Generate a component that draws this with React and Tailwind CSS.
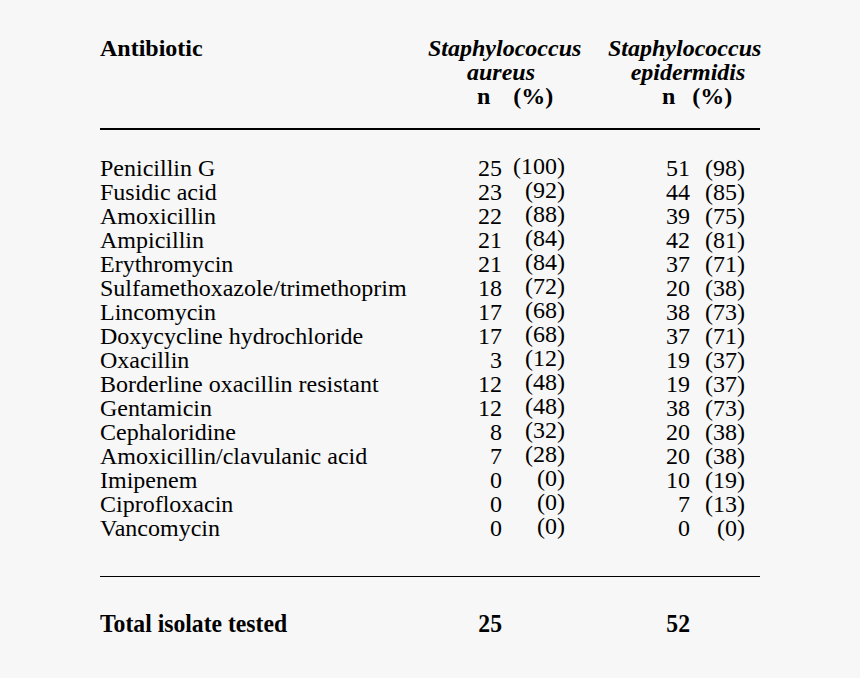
import React from "react";

const rows = [
  ["Penicillin G", "25", "(100)", "51", "(98)"],
  ["Fusidic acid", "23", "(92)", "44", "(85)"],
  ["Amoxicillin", "22", "(88)", "39", "(75)"],
  ["Ampicillin", "21", "(84)", "42", "(81)"],
  ["Erythromycin", "21", "(84)", "37", "(71)"],
  ["Sulfamethoxazole/trimethoprim", "18", "(72)", "20", "(38)"],
  ["Lincomycin", "17", "(68)", "38", "(73)"],
  ["Doxycycline hydrochloride", "17", "(68)", "37", "(71)"],
  ["Oxacillin", "3", "(12)", "19", "(37)"],
  ["Borderline oxacillin resistant", "12", "(48)", "19", "(37)"],
  ["Gentamicin", "12", "(48)", "38", "(73)"],
  ["Cephaloridine", "8", "(32)", "20", "(38)"],
  ["Amoxicillin/clavulanic acid", "7", "(28)", "20", "(38)"],
  ["Imipenem", "0", "(0)", "10", "(19)"],
  ["Ciprofloxacin", "0", "(0)", "7", "(13)"],
  ["Vancomycin", "0", "(0)", "0", "(0)"],
];

const grid = "grid grid-cols-[320px_82px_63px_125px_55px]";

export default function App() {
  return (
    <div
      className="w-[860px] h-[678px] bg-[#f7f7f7] text-black overflow-hidden"
      style={{ fontFamily: '"Liberation Serif", "Times New Roman", serif' }}
    >
      <div className="pl-[100px] pt-[36px] w-[760px]">
        {/* Header */}
        <div className="flex text-[24px] leading-[24px] font-bold">
          <div className="w-[328px]">Antibiotic</div>
          <div className="w-[152px] flex flex-col">
            <div className="italic text-center">Staphylococcus</div>
            <div className="italic text-center pr-[6px]">aureus</div>
            <div className="flex pl-[49px]">
              <span>n</span>
              <span className="ml-[23px]">(%)</span>
            </div>
          </div>
          <div className="w-[28px]" />
          <div className="w-[152px] flex flex-col">
            <div className="italic text-center">Staphylococcus</div>
            <div className="italic text-center pl-[8px]">epidermidis</div>
            <div className="flex pl-[54px]">
              <span>n</span>
              <span className="ml-[17px]">(%)</span>
            </div>
          </div>
        </div>

        <div className="mt-[20px] h-[1.5px] bg-black w-[660px]" />

        {/* Body */}
        <div className="mt-[26px] text-[24px] leading-[24px]">
          {rows.map((r) => (
            <div key={r[0]} className={grid}>
              <div className="whitespace-nowrap">{r[0]}</div>
              <div className="text-right">{r[1]}</div>
              <div className="text-right -translate-y-[2px]">{r[2]}</div>
              <div className="text-right">{r[3]}</div>
              <div className="text-right">{r[4]}</div>
            </div>
          ))}
        </div>

        <div className="mt-[36px] h-[1.5px] bg-black w-[660px]" />

        {/* Total */}
        <div className={grid + " mt-[35px] text-[26px] leading-[24px] font-bold"}>
          <div className="whitespace-nowrap">
            <span className="inline-block origin-left scale-x-[0.91]">Total isolate tested</span>
          </div>
          <div className="text-right">
            <span className="inline-block origin-right scale-x-[0.91]">25</span>
          </div>
          <div />
          <div className="text-right">
            <span className="inline-block origin-right scale-x-[0.91]">52</span>
          </div>
          <div />
        </div>
      </div>
    </div>
  );
}
